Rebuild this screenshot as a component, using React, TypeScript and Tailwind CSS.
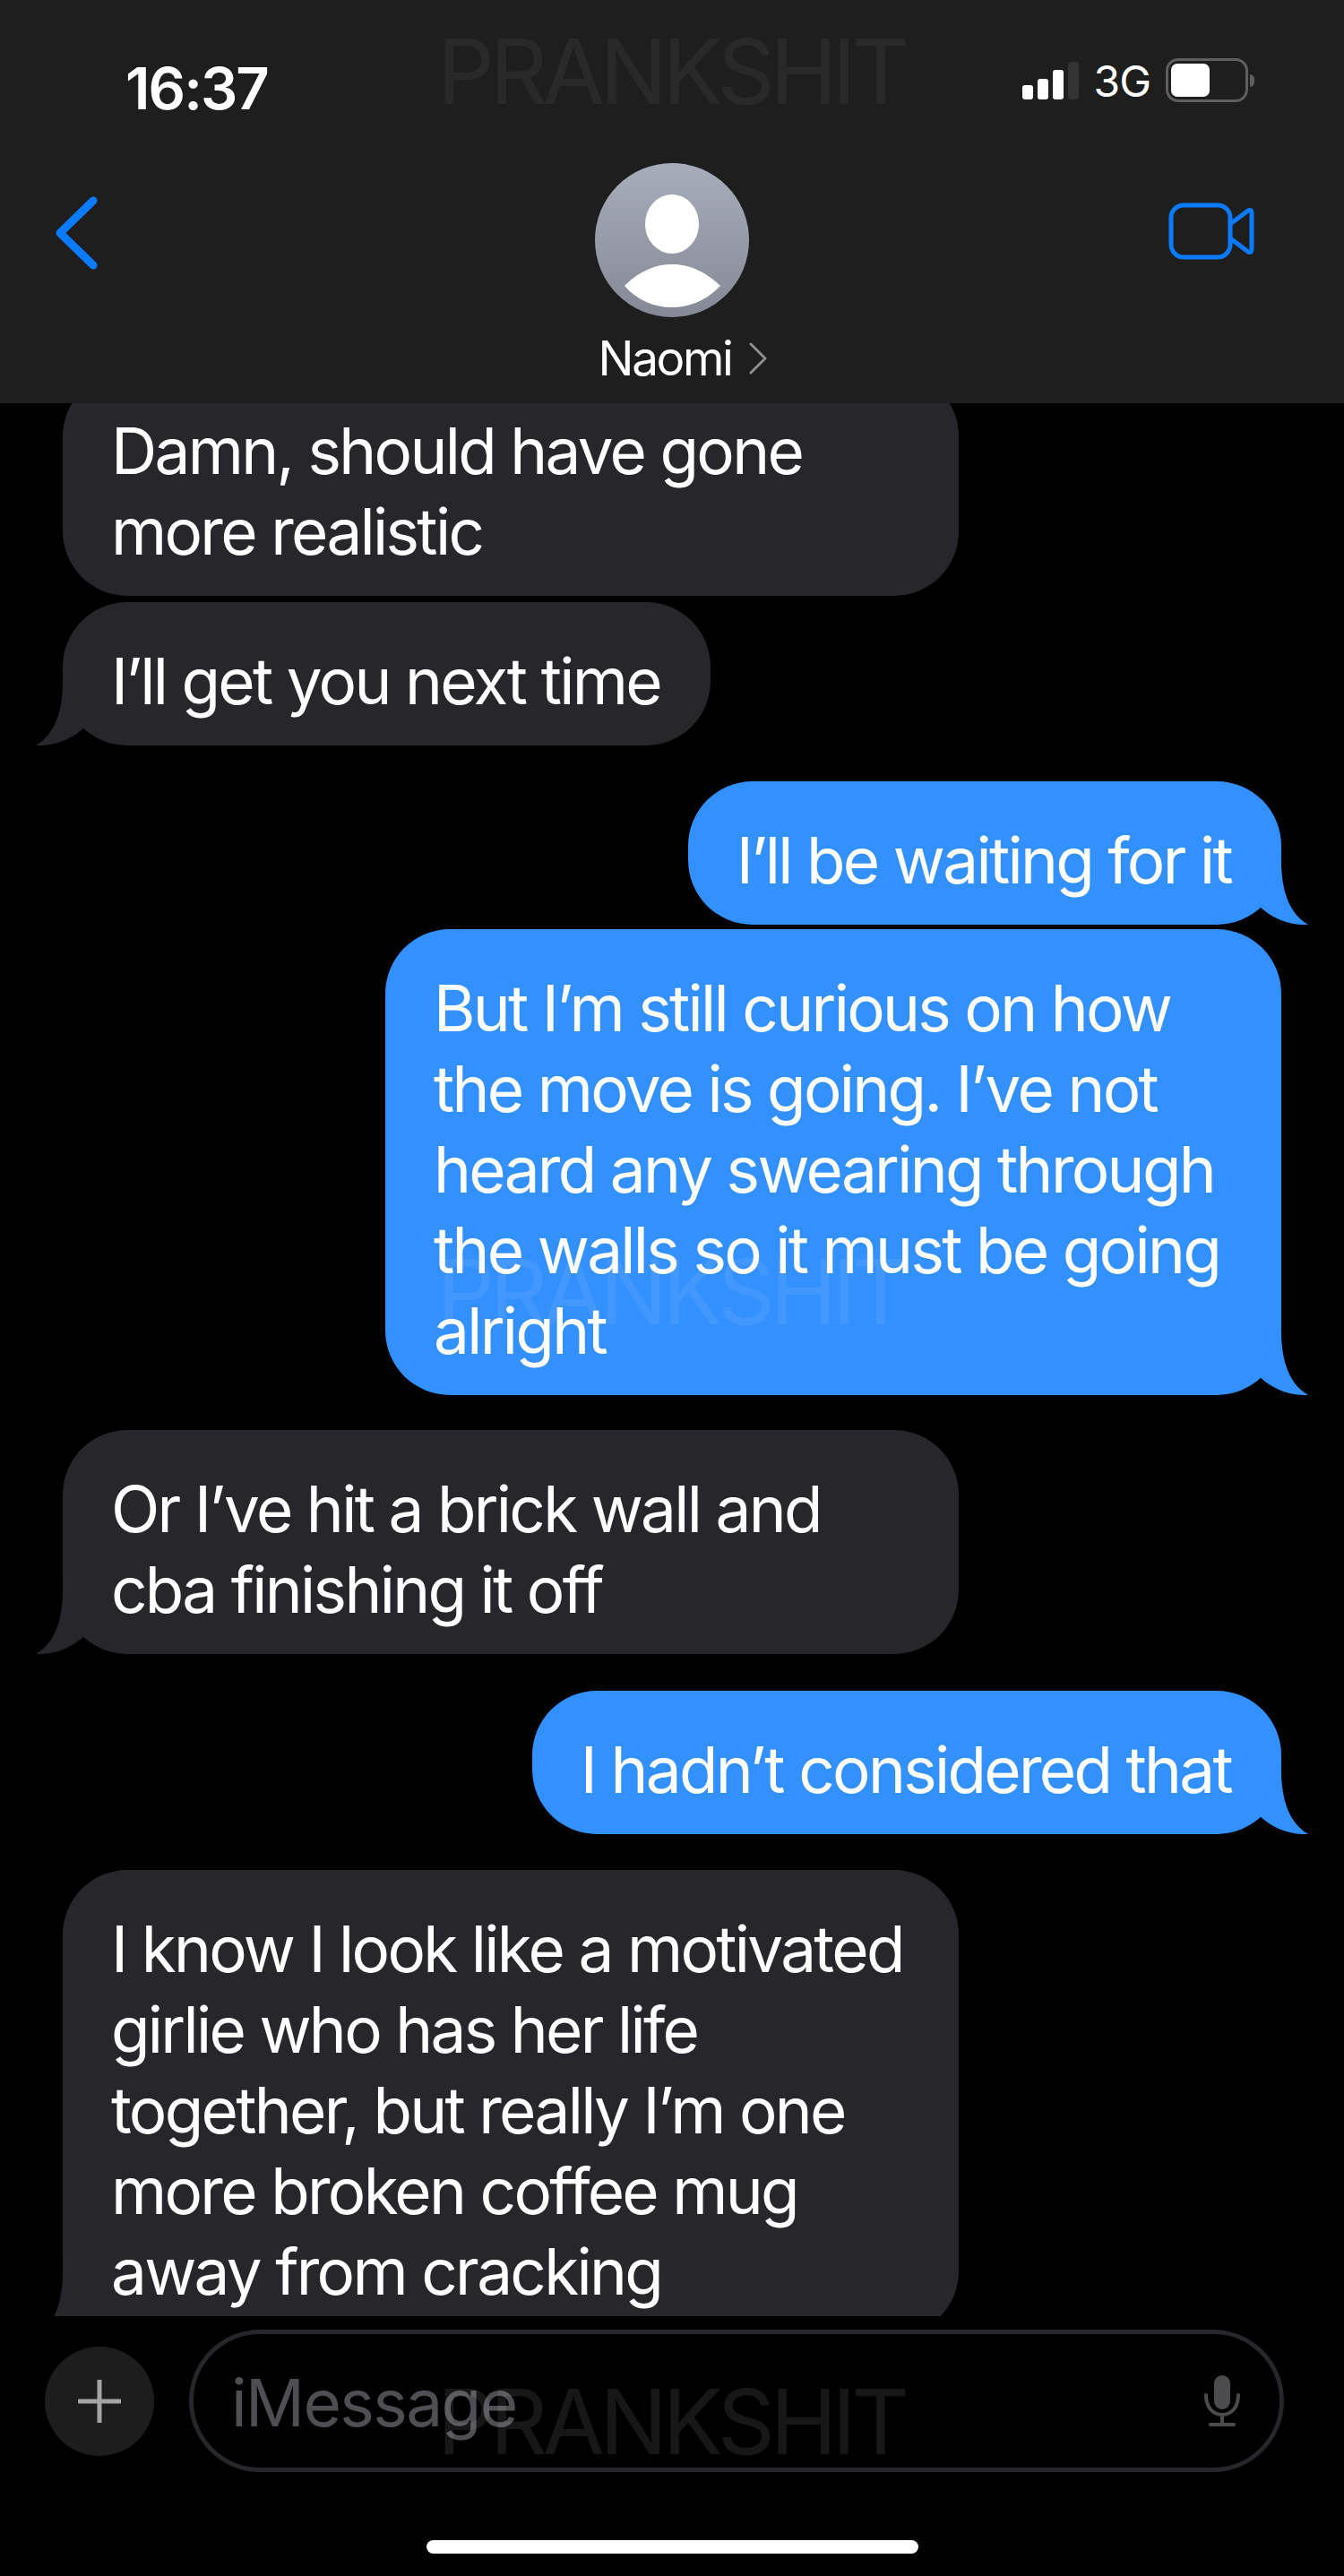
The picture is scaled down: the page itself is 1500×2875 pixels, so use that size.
import type { ReactNode } from "react";

const SANS = "font-['Inter','Liberation_Sans',sans-serif]";

function Watermark({ className }: { className: string }) {
  return (
    <div
      className={`pointer-events-none absolute left-[488px] text-[100px] leading-none tracking-[-0.052em] ${className}`}
    >
      PRANKSHIT
    </div>
  );
}

function Tail({ side, color }: { side: "left" | "right"; color: string }) {
  return (
    <svg
      viewBox="0 0 70 80"
      className={`absolute bottom-0 h-[80px] w-[70px] ${
        side === "left" ? "left-[-30px]" : "right-[-30px] -scale-x-100"
      }`}
    >
      <path d="M30 0 C31 36 24 66 0 80 C22 81 40 73 55 59 L70 30 L60 0 Z" fill={color} />
    </svg>
  );
}

function Bubble({
  from,
  tail = true,
  className = "",
  children,
}: {
  from: "me" | "them";
  tail?: boolean;
  className?: string;
  children: ReactNode;
}) {
  const mine = from === "me";
  const fill = mine ? "#3290ff" : "#26262b";
  return (
    <div
      className={`relative whitespace-nowrap rounded-[72px] pb-[27px] pl-[54px] pr-[56px] pt-[43px] text-[71px] leading-[90px] tracking-[-0.038em] text-white ${
        mine ? "self-end bg-[#3290ff]" : "self-start bg-[#26262b]"
      } ${className}`}
    >
      {children}
      {tail && <Tail side={mine ? "right" : "left"} color={fill} />}
    </div>
  );
}

function StatusBar() {
  return (
    <div className="flex h-[182px] items-start justify-between pl-[140px] pr-[100px] pt-[65px] text-white">
      <span className="mt-[-4px] text-[65px] font-semibold leading-[76px] tracking-[-0.03em]">16:37</span>
      <div className="flex items-start">
        <div className="mt-[4px] flex h-[42px] items-end gap-[5px]">
          <div className="h-[16px] w-[12px] rounded-[3px] bg-white" />
          <div className="h-[23px] w-[12px] rounded-[3px] bg-white" />
          <div className="h-[33px] w-[12px] rounded-[3px] bg-white" />
          <div className="h-[42px] w-[12px] rounded-[3px] bg-[#333333]" />
        </div>
        <span className="ml-[16px] mt-[3px] text-[48px] leading-[46px] tracking-[-0.02em]">3G</span>
        <div className="ml-[17px] h-[49px] w-[92px] rounded-[14px] border-[3px] border-[#5f5f5f] p-[3px]">
          <div className="h-full w-[43px] rounded-[7px] bg-white" />
        </div>
        <div className="ml-[2px] mt-[18px] h-[14px] w-[5px] rounded-r-full bg-[#5f5f5f]" />
      </div>
    </div>
  );
}

function NavBar() {
  return (
    <div className="grid grid-cols-[1fr_auto_1fr] px-[60px]">
      <svg viewBox="0 0 50 82" className="mt-[37px] h-[82px] w-[50px]" fill="none">
        <path d="M44 5 L7 41 L44 77" stroke="#0a7aff" strokeWidth="9" strokeLinecap="round" strokeLinejoin="round" />
      </svg>
      <div className="flex flex-col items-center">
        <svg viewBox="0 0 172 172" className="h-[172px] w-[172px]">
          <defs>
            <linearGradient id="avatarFill" x1="0" y1="0" x2="0" y2="1">
              <stop offset="0" stopColor="#a8adbb" />
              <stop offset="1" stopColor="#858995" />
            </linearGradient>
          </defs>
          <circle cx="86" cy="86" r="86" fill="url(#avatarFill)" />
          <ellipse cx="86" cy="68" rx="30" ry="33" fill="#fff" />
          <path d="M33 137 C50 120 68 113 86 113 C104 113 122 120 140 137 C125 153 106 161 86 161 C66 161 47 153 33 137 Z" fill="#fff" />
        </svg>
        <div className="ml-[24px] mt-[16px] flex items-center text-white">
          <span className="text-[53px] leading-[60px] tracking-[-0.045em]">Naomi</span>
          <svg viewBox="0 0 20 36" className="ml-[20px] h-[36px] w-[20px]" fill="none">
            <path d="M2 2 L18 18 L2 34" stroke="#8e8e8e" strokeWidth="3" strokeLinecap="round" strokeLinejoin="round" />
          </svg>
        </div>
      </div>
      <svg viewBox="0 0 96 64" className="mr-[40px] mt-[44px] h-[64px] w-[96px] justify-self-end" fill="none">
        <rect x="3" y="3" width="66" height="58" rx="14" stroke="#0a7aff" strokeWidth="5" />
        <path d="M69 24 L89 9 Q93 7 93 12 L93 52 Q93 57 89 55 L69 40" stroke="#0a7aff" strokeWidth="5" strokeLinejoin="round" />
      </svg>
    </div>
  );
}

function Composer() {
  return (
    <div className="mt-[15px] flex items-center pl-[50px]">
      <div className="flex h-[122px] w-[122px] items-center justify-center rounded-full bg-[#1e1d1e]">
        <svg viewBox="0 0 48 48" className="h-[48px] w-[48px]">
          <path d="M24 1 V47 M1 24 H47" stroke="#a5a5a5" strokeWidth="5" strokeLinecap="round" />
        </svg>
      </div>
      <div className="ml-[39px] flex h-[159px] w-[1222px] items-center justify-between rounded-[80px] border-[5px] border-[#26272b] pl-[42px] pr-[44px]">
        <span className="mt-[5px] text-[73px] leading-[90px] tracking-[-0.022em] text-[#4f4f53]">iMessage</span>
        <svg viewBox="0 0 40 58" className="h-[58px] w-[40px]" fill="none">
          <rect x="11" y="0" width="18" height="38" rx="9" fill="#4c4c4f" />
          <path d="M2 22 C2 36 10 44 20 44 C30 44 38 36 38 22 M20 44 V55 M7 55 H33" stroke="#4c4c4f" strokeWidth="4" strokeLinecap="round" />
        </svg>
      </div>
    </div>
  );
}

export default function App() {
  return (
    <div className={`relative flex h-[2875px] w-[1500px] flex-col overflow-hidden bg-black ${SANS}`}>
      <header className="h-[450px] shrink-0 bg-[#1e1e1e]">
        <StatusBar />
        <NavBar />
      </header>

      <main className="h-[2135px] shrink-0 overflow-hidden px-[70px]">
        <div className="mt-[-35px] flex flex-col">
          <Bubble from="them" tail={false} className="w-[1000px]">
            Damn, should have gone
            <br />
            more realistic
          </Bubble>
          <Bubble from="them" className="mt-[7px]">I’ll get you next time</Bubble>
          <Bubble from="me" className="mt-[40px]">I’ll be waiting for it</Bubble>
          <Bubble from="me" className="mt-[5px] w-[1000px]">
            But I’m still curious on how
            <br />
            the move is going. I’ve not
            <br />
            heard any swearing through
            <br />
            the walls so it must be going
            <br />
            alright
          </Bubble>
          <Bubble from="them" className="mt-[39px] w-[1000px]">
            Or I’ve hit a brick wall and
            <br />
            cba finishing it off
          </Bubble>
          <Bubble from="me" className="mt-[41px]">I hadn’t considered that</Bubble>
          <Bubble from="them" className="mt-[40px] w-[1000px]">
            I know I look like a motivated
            <br />
            girlie who has her life
            <br />
            together, but really I’m one
            <br />
            more broken coffee mug
            <br />
            away from cracking
          </Bubble>
        </div>
      </main>

      <Composer />

      <div className="absolute bottom-[25px] left-[476px] h-[15px] w-[549px] rounded-full bg-white" />

      <Watermark className="top-[30px] text-white/[.05]" />
      <Watermark className="top-[1392px] text-white/[.08]" />
      <Watermark className="top-[2653px] text-white/[.09]" />
    </div>
  );
}
